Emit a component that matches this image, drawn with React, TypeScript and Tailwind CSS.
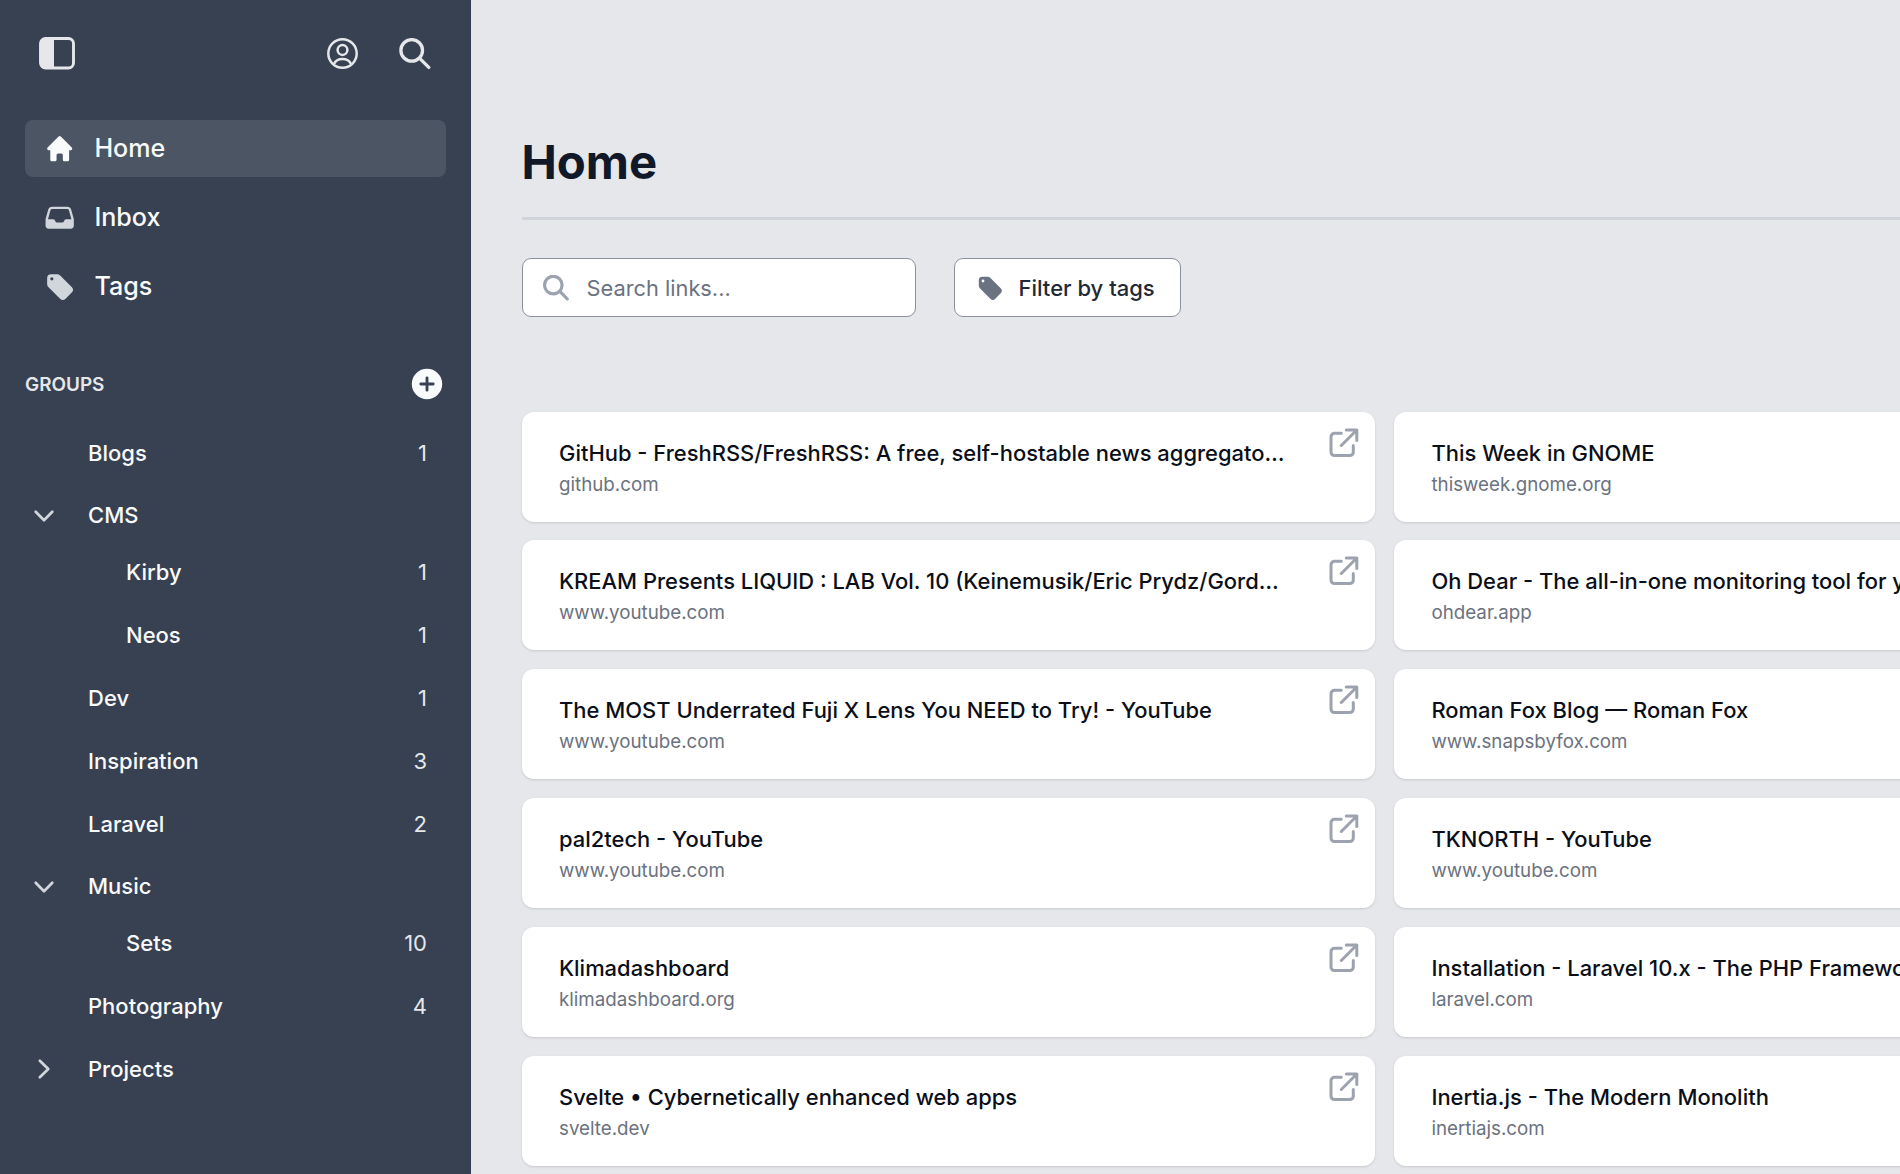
import type { ReactNode } from 'react';
import { HiMiniHome, HiMiniInbox, HiMiniTag, HiMiniPlusCircle } from 'react-icons/hi2';
import { clsx } from 'clsx';

// ============================================
// Types
// ============================================

interface Group {
  name: string;
  count?: number;
  open?: boolean;
  children?: Group[];
}

interface Link {
  title: string;
  host: string;
}

// ============================================
// Data
// ============================================

const groups: Group[] = [
  { name: 'Blogs', count: 1 },
  {
    name: 'CMS',
    open: true,
    children: [
      { name: 'Kirby', count: 1 },
      { name: 'Neos', count: 1 },
    ],
  },
  { name: 'Dev', count: 1 },
  { name: 'Inspiration', count: 3 },
  { name: 'Laravel', count: 2 },
  { name: 'Music', open: true, children: [{ name: 'Sets', count: 10 }] },
  { name: 'Photography', count: 4 },
  { name: 'Projects', open: false, children: [] },
];

const links: Link[] = [
  { title: 'GitHub - FreshRSS/FreshRSS: A free, self-hostable news aggregato…', host: 'github.com' },
  { title: 'This Week in GNOME', host: 'thisweek.gnome.org' },
  { title: 'KREAM Presents LIQUID : LAB Vol. 10 (Keinemusik/Eric Prydz/Gord…', host: 'www.youtube.com' },
  { title: 'Oh Dear - The all-in-one monitoring tool for your…', host: 'ohdear.app' },
  { title: 'The MOST Underrated Fuji X Lens You NEED to Try! - YouTube', host: 'www.youtube.com' },
  { title: 'Roman Fox Blog — Roman Fox', host: 'www.snapsbyfox.com' },
  { title: 'pal2tech - YouTube', host: 'www.youtube.com' },
  { title: 'TKNORTH - YouTube', host: 'www.youtube.com' },
  { title: 'Klimadashboard', host: 'klimadashboard.org' },
  { title: 'Installation - Laravel 10.x - The PHP Framework…', host: 'laravel.com' },
  { title: 'Svelte • Cybernetically enhanced web apps', host: 'svelte.dev' },
  { title: 'Inertia.js - The Modern Monolith', host: 'inertiajs.com' },
];

// ============================================
// Icons
// ============================================

function SidebarIcon() {
  return (
    <svg className="h-[33px] w-9 text-gray-200" viewBox="0 0 36 33" fill="none">
      <rect x="1.5" y="1.5" width="33" height="29.5" rx="5" stroke="currentColor" strokeWidth="2.9" />
      <path d="M6 1h9v30.500H6a5 5 0 0 1-5-5V6a5 5 0 0 1 5-5Z" fill="currentColor" />
    </svg>
  );
}

function UserIcon() {
  return (
    <svg className="size-8 text-gray-200" viewBox="0 0 32 32" fill="none" stroke="currentColor" strokeWidth="2.5">
      <circle cx="15.500" cy="15.500" r="14.200" />
      <circle cx="15.500" cy="12" r="4.900" />
      <path d="M6.800 26.200c1.600-3.300 4.800-5.100 8.700-5.100s7.100 1.800 8.700 5.100" />
    </svg>
  );
}

function SearchIcon({ className, strokeWidth }: { className: string; strokeWidth: number }) {
  return (
    <svg className={className} viewBox="0 0 32 32" fill="none" stroke="currentColor" strokeWidth={strokeWidth} strokeLinecap="round">
      <circle cx="12.700" cy="12.400" r="10.800" />
      <path d="m20.700 20.300 9.100 9.100" />
    </svg>
  );
}

function ChevronIcon({ open }: { open: boolean }) {
  return (
    <svg
      className={clsx('size-6 text-gray-300', !open && '-rotate-90')}
      viewBox="0 0 24 24"
      fill="none"
      stroke="currentColor"
      strokeWidth="2.7"
      strokeLinecap="round"
      strokeLinejoin="round"
    >
      <path d="m3.700 7.800 8.300 8.500 8.300-8.500" />
    </svg>
  );
}

function ExternalIcon() {
  return (
    <svg
      className="size-[30px] text-[#9ca3af]"
      viewBox="0 0 30 30"
      fill="none"
      stroke="currentColor"
      strokeWidth="3"
      strokeLinecap="round"
      strokeLinejoin="round"
    >
      <path d="M12.300 5.300H5.500a3.500 3.500 0 0 0-3.500 3.500v15.300a3.500 3.500 0 0 0 3.500 3.500h15.300a3.500 3.500 0 0 0 3.500-3.500v-6.600" />
      <path d="M12.300 17.500 27.800 2M17.300 2h10.500v10.500" />
    </svg>
  );
}

// ============================================
// Sidebar
// ============================================

function NavItem({ icon, label, active }: { icon: ReactNode; label: string; active?: boolean }) {
  return (
    <a
      className={clsx(
        'flex h-[57px] items-center gap-[19px] rounded-lg pl-[19px] text-[25.100px] font-medium text-gray-50',
        active && 'bg-[#4b5563]'
      )}
    >
      <span className={active ? 'text-gray-50' : 'text-gray-300'}>{icon}</span>
      {label}
    </a>
  );
}

function GroupRow({ group, nested }: { group: Group; nested?: boolean }) {
  return (
    <div className={clsx('flex h-[44px] items-center pr-[19px] text-[22px]', nested ? 'pl-[101px]' : 'pl-[7px]')}>
      {!nested && (
        <span className="flex w-[56px] pr-8">{group.children && <ChevronIcon open={!!group.open} />}</span>
      )}
      <span className="flex-1 font-medium text-gray-50">{group.name}</span>
      <span className="text-gray-200">{group.count}</span>
    </div>
  );
}

function Sidebar() {
  return (
    <aside className="flex w-[471px] shrink-0 flex-col bg-[#374151] px-[25px]">
      <div className="flex h-[107px] items-center pr-[15px] pl-[14px]">
        <SidebarIcon />
        <div className="ml-auto flex items-center gap-10">
          <UserIcon />
          <SearchIcon className="size-8 text-gray-200" strokeWidth={3.3} />
        </div>
      </div>

      <nav className="mt-[13px] flex flex-col gap-3">
        <NavItem icon={<HiMiniHome className="size-[31.400px]" />} label="Home" active />
        <NavItem icon={<HiMiniInbox className="size-[31.400px]" />} label="Inbox" />
        <NavItem icon={<HiMiniTag className="size-[31.400px]" />} label="Tags" />
      </nav>

      <div className="mt-[41px] flex h-[56px] items-center justify-between">
        <h2 className="pt-0.5 text-[18.900px] font-semibold text-gray-200">GROUPS</h2>
        <HiMiniPlusCircle className="size-[38px] text-gray-50" />
      </div>

      <div className="mt-[19px] flex flex-col gap-[18.900px]">
        {groups.map((group) => (
          <div key={group.name} className="flex flex-col gap-[12.600px]">
            <GroupRow group={group} />
            {group.open && (
              <div className="flex flex-col gap-[18.900px]">
                {group.children?.map((child) => (
                  <GroupRow key={child.name} group={child} nested />
                ))}
              </div>
            )}
          </div>
        ))}
      </div>
    </aside>
  );
}

// ============================================
// Link Card
// ============================================

function LinkCard({ link }: { link: Link }) {
  return (
    <article className="flex h-[110px] rounded-xl bg-white pl-[37.500px] shadow">
      <div className="flex-1 pt-[25px] whitespace-nowrap">
        <h3 className="text-[21.950px] leading-[32px] font-medium text-[#0b0f19]">{link.title}</h3>
        <p className="text-[18.750px] leading-[31px] text-[#6b7280]">{link.host}</p>
      </div>
      <div className="pt-4 pr-4">
        <ExternalIcon />
      </div>
    </article>
  );
}

// ============================================
// App
// ============================================

export default function App() {
  return (
    <div className="flex h-[1174px] w-[1900px] overflow-hidden bg-[#e5e7eb] font-['Inter',sans-serif]">
      <Sidebar />
      <main className="w-[1429px] shrink-0 overflow-hidden pt-[132px] pl-[50.500px]">
        <h1 className="text-[47.300px] leading-[60px] font-bold text-[#111827]">Home</h1>
        <div className="mt-[25px] h-[3px] bg-[#d1d5db]" />

        <div className="mt-[38px] flex gap-[38px]">
          <div className="flex h-[59px] w-[394px] items-center gap-[18px] rounded-[9px] border-[1.500px] border-[#8d919d] bg-white pt-px pl-5 text-[21.800px] text-[#6b7280]">
            <SearchIcon className="size-[26px] text-[#9ca3af]" strokeWidth={3.9} />
            Search links...
          </div>
          <button className="flex h-[59px] w-[227px] items-center gap-[15px] rounded-[9px] border-[1.500px] border-[#8d919d] bg-white pt-px pl-[21px] text-[22px] font-medium text-[#1f2937]">
            <HiMiniTag className="size-[28px] text-[#6b7280]" />
            Filter by tags
          </button>
        </div>

        <div className="mt-[94.500px] grid w-[1726px] grid-cols-2 gap-x-[18.860px] gap-y-[18.900px]">
          {links.map((link) => (
            <LinkCard key={link.title} link={link} />
          ))}
        </div>
      </main>
    </div>
  );
}
